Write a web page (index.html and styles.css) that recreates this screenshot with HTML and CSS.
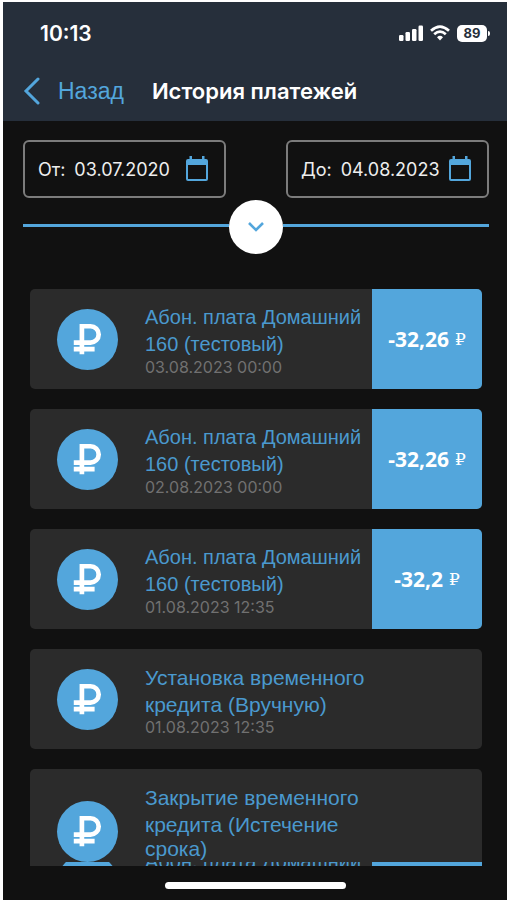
FILE: index.html
```html
<!DOCTYPE html>
<html lang="ru">
<head>
<meta charset="utf-8">
<meta name="viewport" content="width=device-width, initial-scale=1">
<title>История платежей</title>
<link rel="stylesheet" href="styles.css">
</head>
<body>
<svg class="sprite" aria-hidden="true">
  <symbol id="ruble" viewBox="0 0 60 60">
    <path d="M24.500 44.500V17H33a8 8 0 0 1 0 16H16.500M16.500 39.500H37" fill="none" stroke="#fff" stroke-width="4.600"/>
  </symbol>
  <symbol id="calendar" viewBox="0 0 24 26">
    <path d="M3 3H21a2 2 0 0 1 2 2V23a2 2 0 0 1-2 2H3a2 2 0 0 1-2-2V5a2 2 0 0 1 2-2ZM3 9V23H21V9Z" fill="currentColor" fill-rule="evenodd"/>
    <path d="M4.500 0h2.500v4h-2.500zM17 0h2.500v4h-2.500z" fill="currentColor"/>
  </symbol>
</svg>
<div class="screen">
  <header class="header">
    <div class="status">
      <time class="clock">10:13</time>
      <div class="indicators">
        <svg width="24" height="16" viewBox="0 0 24 16" fill="#fff" aria-hidden="true">
          <rect x="0" y="10" width="4.500" height="6" rx="1.200"/>
          <rect x="6.500" y="7" width="4.500" height="9" rx="1.200"/>
          <rect x="13" y="4" width="4.500" height="12" rx="1.200"/>
          <rect x="19.500" y="0.500" width="4.500" height="15.500" rx="1.200"/>
        </svg>
        <svg width="20" height="16" viewBox="0 0 20 16" fill="none" stroke="#fff" stroke-width="2.700" aria-hidden="true">
          <path d="M1 5.800Q10-2.500 19 5.800M4.200 9.300Q10 4 15.800 9.300"/>
          <path d="M7 12.300Q10 9.400 13 12.300L10 15.600Z" fill="#fff" stroke="none"/>
        </svg>
        <div class="battery"><span class="charge">89</span></div>
      </div>
    </div>
    <nav class="nav">
      <a class="back" href="#">
        <svg width="17" height="28" viewBox="0 0 17 28" fill="none" stroke="currentColor" stroke-width="3" aria-hidden="true"><path d="M15 2L3 14L15 26" stroke-linecap="round" stroke-linejoin="miter"/></svg>
        <span>Назад</span>
      </a>
      <h1 class="title">История платежей</h1>
    </nav>
  </header>

  <section class="filters">
    <button class="date" type="button"><span>От:</span><span class="value">03.07.2020</span><svg class="calendar"><use href="#calendar"/></svg></button>
    <button class="date" type="button"><span>До:</span><span class="value">04.08.2023</span><svg class="calendar"><use href="#calendar"/></svg></button>
  </section>
  <div class="divider">
    <button class="expand" type="button" aria-label="Развернуть">
      <svg width="16" height="10" viewBox="0 0 16 10" fill="none" stroke="currentColor" stroke-width="2.600" aria-hidden="true"><path d="M1 1L8 8L15 1"/></svg>
    </button>
  </div>

  <main class="list">
    <article class="card card-charge">
      <div class="badge"><svg><use href="#ruble"/></svg></div>
      <div class="info"><h2 class="name">Абон. плата Домашний 160 (тестовый)</h2><time class="when">03.08.2023 00:00</time></div>
      <div class="amount">-32,26 <span class="currency">₽</span></div>
    </article>
    <article class="card card-charge">
      <div class="badge"><svg><use href="#ruble"/></svg></div>
      <div class="info"><h2 class="name">Абон. плата Домашний 160 (тестовый)</h2><time class="when">02.08.2023 00:00</time></div>
      <div class="amount">-32,26 <span class="currency">₽</span></div>
    </article>
    <article class="card card-charge">
      <div class="badge"><svg><use href="#ruble"/></svg></div>
      <div class="info"><h2 class="name">Абон. плата Домашний 160 (тестовый)</h2><time class="when">01.08.2023 12:35</time></div>
      <div class="amount">-32,2 <span class="currency">₽</span></div>
    </article>
    <article class="card">
      <div class="badge"><svg><use href="#ruble"/></svg></div>
      <div class="info"><h2 class="name">Установка временного кредита (Вручную)</h2><time class="when">01.08.2023 12:35</time></div>
    </article>
    <article class="card card-long">
      <div class="badge"><svg><use href="#ruble"/></svg></div>
      <div class="info"><h2 class="name">Закрытие временного кредита (Истечение <span class="tail">срока)</span></h2></div>
    </article>
    <article class="card card-charge card-under">
      <div class="badge"><svg><use href="#ruble"/></svg></div>
      <div class="info"><h2 class="name">Абон. плата Домашний</h2></div>
      <div class="amount"></div>
    </article>
  </main>
  <footer class="home"><div class="home-bar"></div></footer>
</div>
</body>
</html>
```

FILE: styles.css
```css
:root {
  --blue: #53a6dc;
  --bg: #111;
  --card: #2b2b2b;
}

* { box-sizing: border-box; }

body {
  margin: 0;
  background: #fff;
  color: #fff;
  font-family: "Liberation Sans", Arial, sans-serif;
}

button { font: inherit; cursor: pointer; }

.sprite { position: absolute; width: 0; height: 0; }

.screen {
  display: flex;
  flex-direction: column;
  height: 100vh;
  border: solid #fff;
  border-width: 2px 0 0 3px;
  background: var(--bg);
}

.header {
  flex: none;
  height: 119px;
  background: #262f3b;
  font-family: Inter, sans-serif;
}

.status {
  display: flex;
  align-items: center;
  justify-content: space-between;
  height: 62px;
  padding: 0 17px 0 37px;
}

.clock { font-size: 21px; font-weight: 600; }

.indicators { display: flex; align-items: center; gap: 7px; }

.battery {
  position: relative;
  width: 30px;
  height: 17px;
  margin-right: 3px;
  border-radius: 5px;
  background: #fff;
  color: #262f3b;
  font-size: 13px;
  font-weight: 700;
  line-height: 17px;
  text-align: center;
}

.battery::after {
  content: "";
  position: absolute;
  top: 6px;
  right: -3px;
  width: 2px;
  height: 5px;
  border-radius: 0 2px 2px 0;
  background: #fff;
}

.nav {
  display: flex;
  align-items: center;
  gap: 28px;
  height: 54px;
  padding-left: 20px;
}

.back {
  display: flex;
  align-items: center;
  gap: 18px;
  color: var(--blue);
  font-family: "Liberation Sans", Arial, sans-serif;
  font-size: 23px;
  text-decoration: none;
}

.title { margin: 0; font-size: 22px; font-weight: 600; }

.filters {
  display: flex;
  flex: none;
  justify-content: space-between;
  padding: 19px 18px 0 20px;
}

.date {
  display: flex;
  align-items: center;
  width: 203px;
  height: 58px;
  padding: 0 15px 0 13px;
  border: 2px solid #7c7c7c;
  border-radius: 6px;
  background: none;
  color: #eee;
  font-family: Inter, sans-serif;
  font-size: 18px;
}

.value { margin-left: 9px; }

.calendar {
  flex: none;
  width: 24px;
  height: 26px;
  margin-left: auto;
  color: var(--blue);
}

.divider {
  display: flex;
  flex: none;
  align-items: center;
  justify-content: center;
  height: 54px;
  margin: 2px 18px 0 20px;
}

.divider::before,
.divider::after {
  content: "";
  flex: 1;
  height: 3px;
  margin-bottom: 3px;
  background: var(--blue);
}

.expand {
  display: grid;
  place-items: center;
  width: 54px;
  height: 54px;
  padding: 0;
  border: 0;
  border-radius: 50%;
  background: #fff;
  color: var(--blue);
}

.list {
  display: flex;
  flex: 1;
  flex-direction: column;
  gap: 20px;
  min-height: 0;
  margin-top: 35px;
  padding: 0 25px 0 27px;
  overflow: hidden;
}

.card {
  display: flex;
  flex: none;
  align-items: center;
  height: 100px;
  padding-left: 27px;
  border-radius: 5px;
  background: var(--card);
  overflow: hidden;
}

.badge {
  flex: none;
  width: 61px;
  height: 61px;
  border-radius: 50%;
  background: var(--blue);
}

.badge svg { display: block; width: 100%; height: 100%; }

.info {
  flex: 1;
  align-self: flex-start;
  min-width: 0;
  padding: 15px 0 0 27px;
}

.name {
  max-width: 227px;
  margin: 0;
  color: #4a99ce;
  font-size: 21px;
  font-weight: 400;
  line-height: 27px;
}

/* Leaves room beside the amount column. */
.card-charge .name { font-size: 20px; }

.when {
  display: block;
  color: #717171;
  font-family: Inter, sans-serif;
  font-size: 16px;
  line-height: 18px;
}

.amount {
  display: flex;
  flex: none;
  align-items: center;
  align-self: stretch;
  justify-content: center;
  gap: 6px;
  width: 110px;
  background: var(--blue);
  font-family: "Noto Sans", sans-serif;
  font-size: 21px;
  font-weight: 700;
}

.currency { font-family: "DejaVu Serif", serif; font-size: 17px; font-weight: 400; }

/* The long entry is laid over the one that follows it. */
.card-long {
  z-index: 1;
  height: 93px;
  padding-top: 32px;
  align-items: flex-start;
  border-radius: 5px 5px 0 0;
}

.card-long .info { margin-top: -32px; }

.tail { display: block; line-height: 22px; }

.card-under { margin-top: -49px; }

.home {
  display: flex;
  flex: none;
  justify-content: center;
  height: 34px;
  padding-top: 16px;
}

.home-bar { width: 181px; height: 7px; border-radius: 4px; background: #fff; }
```
